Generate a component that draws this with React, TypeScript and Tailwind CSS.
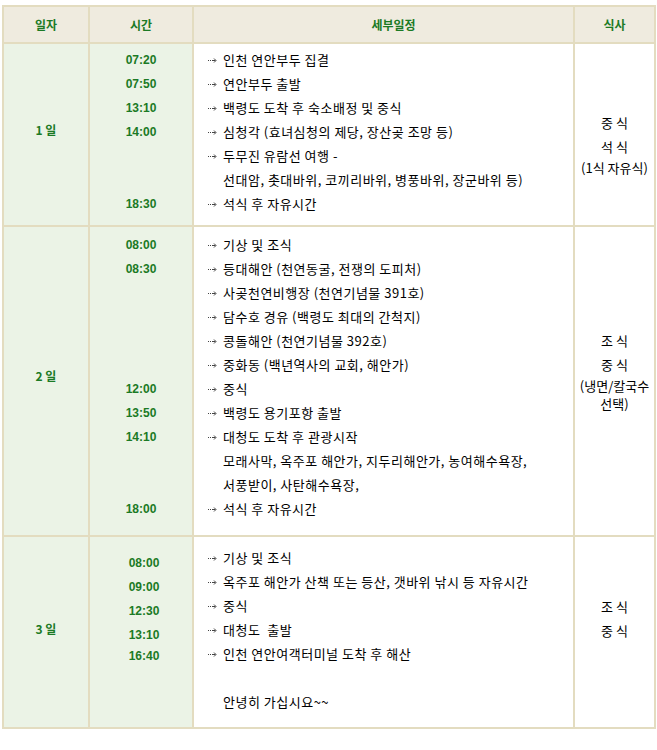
const green = "text-[#1b7a25]";

type Line = { time?: string; text: string; cont?: boolean };

const day1: Line[] = [
  { time: "07:20", text: "인천 연안부두 집결" },
  { time: "07:50", text: "연안부두 출발" },
  { time: "13:10", text: "백령도 도착 후 숙소배정 및 중식" },
  { time: "14:00", text: "심청각 (효녀심청의 제당, 장산곶 조망 등)" },
  { text: "두무진 유람선 여행 -" },
  { text: "선대암, 촛대바위, 코끼리바위, 병풍바위, 장군바위 등)", cont: true },
  { time: "18:30", text: "석식 후 자유시간" },
];

const day2: Line[] = [
  { time: "08:00", text: "기상 및 조식" },
  { time: "08:30", text: "등대해안 (천연동굴, 전쟁의 도피처)" },
  { text: "사곶천연비행장 (천연기념물 391호)" },
  { text: "담수호 경유 (백령도 최대의 간척지)" },
  { text: "콩돌해안 (천연기념물 392호)" },
  { text: "중화동 (백년역사의 교회, 해안가)" },
  { time: "12:00", text: "중식" },
  { time: "13:50", text: "백령도 용기포항 출발" },
  { time: "14:10", text: "대청도 도착 후 관광시작" },
  { text: "모래사막, 옥주포 해안가, 지두리해안가, 농여해수욕장,", cont: true },
  { text: "서풍받이, 사탄해수욕장,", cont: true },
  { time: "18:00", text: "석식 후 자유시간" },
];

const day3: Line[] = [
  { text: "기상 및 조식" },
  { text: "옥주포 해안가 산책 또는 등산, 갯바위 낚시 등 자유시간" },
  { text: "중식" },
  { text: "대청도  출발" },
  { text: "인천 연안여객터미널 도착 후 해산" },
  { text: "", cont: true },
  { text: "안녕히 가십시요~~", cont: true },
];

const cell = "border-2 border-[#e3dcc0] p-0";
const time = `font-['Liberation_Sans','Noto_Sans_CJK_KR',sans-serif] text-[12px] font-bold ${green} leading-[24px]`;

// dotted arrow bullet
function Arrow() {
  return (
    <svg width="9" height="7" viewBox="0 0 9 7" className="text-[#444]">
      <rect x="0" y="3" width="1" height="1" fill="currentColor" />
      <rect x="2" y="3" width="1" height="1" fill="currentColor" />
      <path d="M4 3.5h3.5M6 1.5l2 2-2 2" stroke="currentColor" strokeWidth="1" fill="none" />
    </svg>
  );
}

function Details({ lines }: { lines: Line[] }) {
  return (
    <div className="flex flex-col pl-[14px] tracking-[0.5px]">
      {lines.map((l, i) => (
        <div key={i} className="flex h-[24px] items-center whitespace-pre">
          <span className="flex w-[15px] items-center">
            {l.cont || l.text === "" ? null : <Arrow />}
          </span>
          <span>{l.text}</span>
        </div>
      ))}
    </div>
  );
}

function Times({ lines }: { lines: Line[] }) {
  return (
    <div className="flex flex-col items-center">
      {lines.map((l, i) => (
        <div key={i} className={`h-[24px] ${time}`}>
          {l.time ?? ""}
        </div>
      ))}
    </div>
  );
}

export default function App() {
  return (
    <div className="min-h-[750px] bg-white pl-[2px] pt-[5px] font-['Noto_Sans_CJK_KR',sans-serif] text-[13px] text-black">
      <table className="w-[652px] table-fixed border-collapse">
        <colgroup>
          <col className="w-[86px]" />
          <col className="w-[104px]" />
          <col className="w-[381px]" />
          <col className="w-[81px]" />
        </colgroup>
        <thead>
          <tr className="h-[37px] bg-[#efebdf] text-[12px] font-bold">
            <th className={`${cell} ${green} font-bold`}>일자</th>
            <th className={`${cell} ${green} font-bold`}>시간</th>
            <th className={`${cell} ${green} pl-[20px] font-bold`}>세부일정</th>
            <th className={`${cell} ${green} font-bold`}>식사</th>
          </tr>
        </thead>
        <tbody>
          <tr className="h-[183px]">
            <td className={`${cell} bg-[#ebf3e6] align-middle`}>
              <div className={`pb-[10px] text-center text-[12px] font-bold ${green}`}>1 일</div>
            </td>
            <td className={`${cell} bg-[#ebf3e6] align-top`}>
              <div className="pt-[4px]">
                <Times lines={day1} />
              </div>
            </td>
            <td className={`${cell} align-top`}>
              <div className="pt-[4px]">
                <Details lines={day1} />
              </div>
            </td>
            <td className={`${cell} align-top`}>
              <div className="flex flex-col items-center pt-[67px] text-center">
                <div className="leading-[24px]">중 식</div>
                <div className="leading-[24px]">석 식</div>
                <div className="leading-[18px]">(1식 자유식)</div>
              </div>
            </td>
          </tr>
          <tr className="h-[310px]">
            <td className={`${cell} bg-[#ebf3e6] align-middle`}>
              <div className={`pb-[10px] text-center text-[12px] font-bold ${green}`}>2 일</div>
            </td>
            <td className={`${cell} bg-[#ebf3e6] align-top`}>
              <div className="pt-[6px]">
                <Times lines={day2} />
              </div>
            </td>
            <td className={`${cell} align-top`}>
              <div className="pt-[6px]">
                <Details lines={day2} />
              </div>
            </td>
            <td className={`${cell} align-top`}>
              <div className="flex flex-col items-center pt-[102px] text-center">
                <div className="leading-[24px]">조 식</div>
                <div className="leading-[24px]">중 식</div>
                <div className="leading-[18px]">(냉면/칼국수</div>
                <div className="leading-[18px]">선택)</div>
              </div>
            </td>
          </tr>
          <tr className="h-[192px]">
            <td className={`${cell} bg-[#ebf3e6] align-middle`}>
              <div className={`pb-[6px] text-center text-[12px] font-bold ${green}`}>3 일</div>
            </td>
            <td className={`${cell} bg-[#ebf3e6] align-top`}>
              <div className={`flex flex-col items-center pl-[6px] pt-[14px] ${time}`}>
                <div className="h-[24px]">08:00</div>
                <div className="h-[24px]">09:00</div>
                <div className="h-[24px]">12:30</div>
                <div className="h-[21px] leading-[24px]">13:10</div>
                <div className="h-[24px]">16:40</div>
              </div>
            </td>
            <td className={`${cell} align-top`}>
              <div className="pt-[9px]">
                <Details lines={day3} />
              </div>
            </td>
            <td className={`${cell} align-top`}>
              <div className="flex flex-col items-center pt-[58px] text-center">
                <div className="leading-[24px]">조 식</div>
                <div className="leading-[24px]">중 식</div>
              </div>
            </td>
          </tr>
        </tbody>
      </table>
    </div>
  );
}
